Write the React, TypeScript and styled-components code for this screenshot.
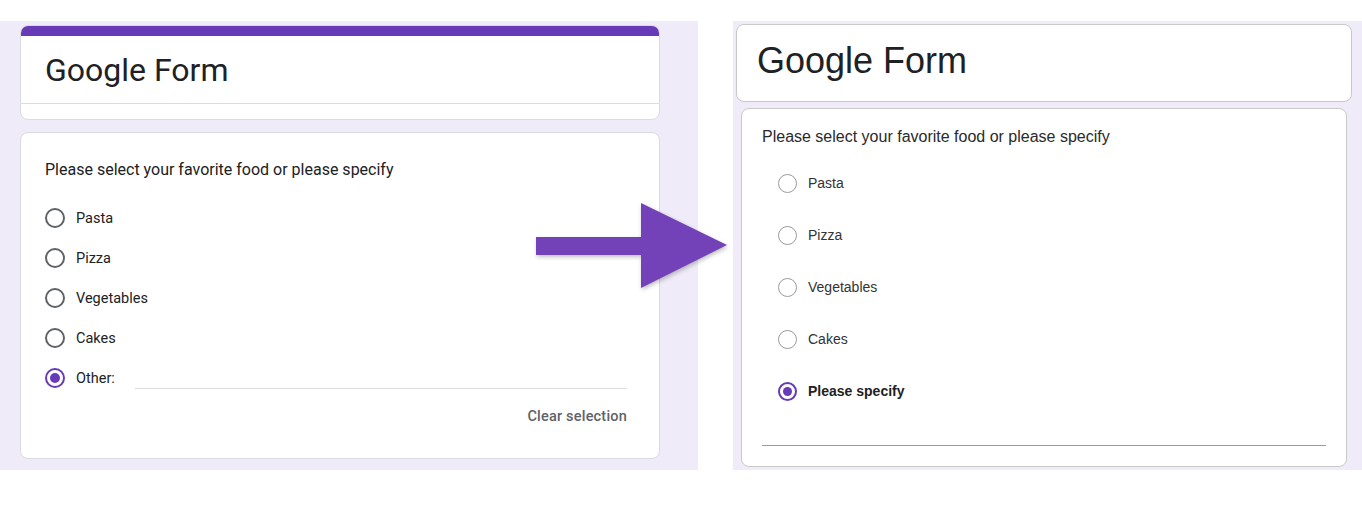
import React from "react";
import styled, { createGlobalStyle, css } from "styled-components";

const GlobalStyle = createGlobalStyle`
  html, body { margin: 0; padding: 0; background: #fff; }
  * { box-sizing: border-box; }
`;

// ======== LAYOUT ========
const Page = styled.div`
  position: relative;
  width: 1362px;
  height: 512px;
  display: flex;
  align-items: flex-start;
  gap: 35px;
  padding-top: 21px;
  overflow: hidden;
`;

const Panel = styled.div<{ $w: number; $pad: string; $gap: number }>`
  width: ${(p) => p.$w}px;
  height: 449px;
  background: #efebf8;
  padding: ${(p) => p.$pad};
  display: flex;
  flex-direction: column;
  gap: ${(p) => p.$gap}px;
`;

// ======== LEFT (Google Forms) ========
const GTitleCard = styled.div`
  background: #fff;
  border: 1px solid #dadce0;
  border-radius: 8px;
  overflow: hidden;
  height: 95px;
`;

const GBar = styled.div`
  height: 10px;
  background: #673ab7;
`;

const GTitle = styled.h1`
  margin: 14px 0 0 24px;
  font-family: Roboto, "Noto Sans", sans-serif;
  font-weight: 400;
  font-size: 32px;
  line-height: 40px;
  color: #202124;
`;

const GDivider = styled.div`
  margin-top: 13px;
  border-top: 1px solid #dadce0;
`;

const GCard = styled.div`
  background: #fff;
  border: 1px solid #dadce0;
  border-radius: 8px;
  height: 327px;
  padding: 27px 32px 0 24px;
  font-family: Roboto, "Noto Sans", sans-serif;
  color: #202124;
`;

const GQuestion = styled.div`
  font-size: 16px;
  line-height: 20px;
`;

const GOptions = styled.div`
  margin-top: 18px;
  display: flex;
  flex-direction: column;
`;

const GRow = styled.div`
  height: 40px;
  display: flex;
  align-items: center;
  gap: 11px;
  font-size: 14.5px;
`;

const radioBase = css`
  flex: none;
  border-radius: 50%;
  display: flex;
  align-items: center;
  justify-content: center;
`;

const GRadio = styled.span<{ $on?: boolean }>`
  ${radioBase};
  width: 20px;
  height: 20px;
  border: 2px solid ${(p) => (p.$on ? "#673ab7" : "#5f6368")};
  &::after {
    content: "";
    width: 10px;
    height: 10px;
    border-radius: 50%;
    background: #673ab7;
    display: ${(p) => (p.$on ? "block" : "none")};
  }
`;

const GOtherInput = styled.div`
  flex: 1;
  align-self: flex-end;
  margin: 0 0 9px 9px;
  border-bottom: 1px solid #dadce0;
`;

const GClear = styled.div`
  margin-top: 10px;
  text-align: right;
  font-size: 14.5px;
  font-weight: 500;
  color: #5f6368;
  letter-spacing: 0.2px;
`;

// ======== RIGHT (custom form) ========
const TitleCard = styled.div`
  margin: 0 10px 0 3px;
  height: 78px;
  background: #fff;
  border: 1px solid #c9c9c9;
  border-radius: 8px;
  display: flex;
  align-items: center;
  padding: 0 0 4px 20px;
`;

const Title = styled.h1`
  margin: 0;
  font-family: "Liberation Sans", Arial, sans-serif;
  font-weight: 400;
  font-size: 36px;
  color: #202124;
`;

const Card = styled.div`
  margin: 0 15px 0 8px;
  height: 359px;
  background: #fff;
  border: 1px solid #c9c9c9;
  border-radius: 8px;
  padding: 18px 20px 0 20px;
  font-family: "Liberation Sans", Arial, sans-serif;
  color: #2a2a2a;
  display: flex;
  flex-direction: column;
`;

const Question = styled.div`
  font-size: 16px;
  line-height: 19px;
`;

const Options = styled.div`
  margin-top: 11px;
  padding-left: 16px;
  display: flex;
  flex-direction: column;
`;

const Row = styled.div<{ $bold?: boolean }>`
  height: 52px;
  display: flex;
  align-items: center;
  gap: 11px;
  font-size: 14px;
  font-weight: ${(p) => (p.$bold ? 700 : 400)};
  color: ${(p) => (p.$bold ? "#222" : "#333")};
`;

const Radio = styled.span<{ $on?: boolean }>`
  ${radioBase};
  width: 19px;
  height: 19px;
  border: ${(p) => (p.$on ? "2px solid #673ab7" : "1.5px solid #9a9a9a")};
  &::after {
    content: "";
    width: 9px;
    height: 9px;
    border-radius: 50%;
    background: #673ab7;
    display: ${(p) => (p.$on ? "block" : "none")};
  }
`;

const SpecifyLine = styled.div`
  margin-top: auto;
  margin-bottom: 20px;
  border-bottom: 1px solid #999;
`;

// ======== ARROW ========
const Arrow = styled.svg`
  position: absolute;
  left: 536px;
  top: 200px;
  filter: drop-shadow(1px 2px 2px rgba(0, 0, 0, 0.25));
`;

const foods = ["Pasta", "Pizza", "Vegetables", "Cakes"];

export default function App() {
  return (
    <>
      <GlobalStyle />
      <Page>
        <Panel $w={698} $pad="4px 38px 0 20px" $gap={12}>
          <GTitleCard>
            <GBar />
            <GTitle>Google Form</GTitle>
            <GDivider />
          </GTitleCard>
          <GCard>
            <GQuestion>Please select your favorite food or please specify</GQuestion>
            <GOptions>
              {foods.map((f) => (
                <GRow key={f}>
                  <GRadio />
                  {f}
                </GRow>
              ))}
              <GRow>
                <GRadio $on />
                Other:
                <GOtherInput />
              </GRow>
            </GOptions>
            <GClear>Clear selection</GClear>
          </GCard>
        </Panel>

        <Panel $w={629} $pad="3px 0 3px 0" $gap={6}>
          <TitleCard>
            <Title>Google Form</Title>
          </TitleCard>
          <Card>
            <Question>Please select your favorite food or please specify</Question>
            <Options>
              {foods.map((f) => (
                <Row key={f}>
                  <Radio />
                  {f}
                </Row>
              ))}
              <Row $bold>
                <Radio $on />
                Please specify
              </Row>
            </Options>
            <SpecifyLine />
          </Card>
        </Panel>

        <Arrow width="200" height="96" viewBox="0 0 200 96">
          <path d="M0 37 H105 V3 L191 45 L105 88 V55 H0 Z" fill="#7442b8" />
        </Arrow>
      </Page>
    </>
  );
}
